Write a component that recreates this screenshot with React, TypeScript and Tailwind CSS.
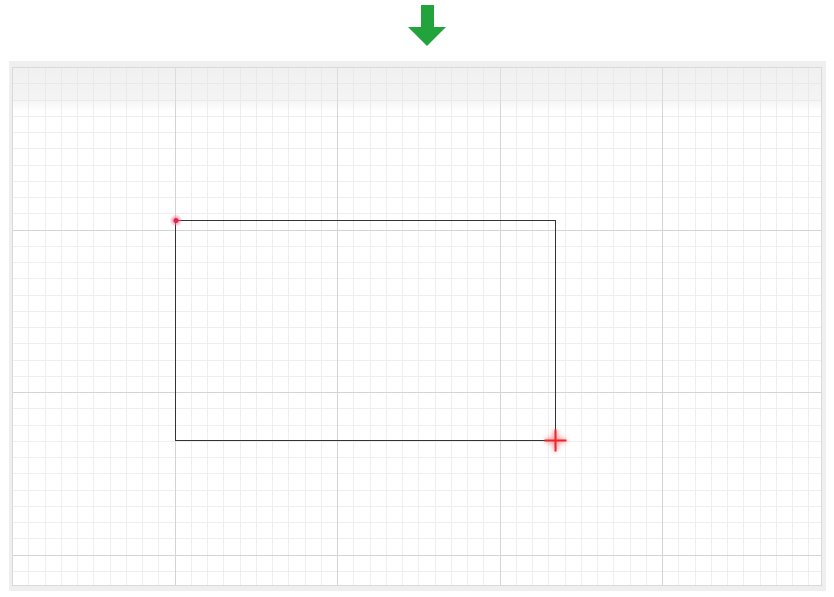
import React from 'react'

// canvas geometry: 10 minor cells per major cell
const W = 810
const H = 519
const MAJOR = 162.5
const MINOR = MAJOR / 10

function GridCanvas() {
  const minorX: number[] = []
  const minorY: number[] = []
  const majorX: number[] = []
  const majorY: number[] = []
  for (let i = 0; i * MINOR <= W; i++) {
    const x = Math.round(i * MINOR) + 0.5
    if (i % 10 === 0) majorX.push(x)
    else minorX.push(x)
  }
  for (let i = 0; i * MINOR <= H; i++) {
    const y = Math.round(i * MINOR) + 0.5
    if (i % 10 === 0) majorY.push(y)
    else minorY.push(y)
  }

  return (
    <svg width={W} height={H} className="block">
      <defs>
        <linearGradient id="shade" x1="0" y1="0" x2="0" y2="1">
          <stop offset="0" stopColor="#e4e4e4" stopOpacity="0.55" />
          <stop offset="0.75" stopColor="#e4e4e4" stopOpacity="0.4" />
          <stop offset="1" stopColor="#e4e4e4" stopOpacity="0" />
        </linearGradient>
        <radialGradient id="dotGlow">
          <stop offset="0" stopColor="#f0507a" stopOpacity="0.75" />
          <stop offset="0.6" stopColor="#f4708f" stopOpacity="0.4" />
          <stop offset="1" stopColor="#f4708f" stopOpacity="0" />
        </radialGradient>
        <filter id="blur" x="-1" y="-1" width="3" height="3">
          <feGaussianBlur stdDeviation="2.5" />
        </filter>
      </defs>

      <rect x={0} y={0} width={W} height={H} fill="#ffffff" />
      {minorX.map((x) => (
        <line key={'mx' + x} x1={x} y1={0} x2={x} y2={H} stroke="#eeeeee" strokeWidth={1} />
      ))}
      {minorY.map((y) => (
        <line key={'my' + y} x1={0} y1={y} x2={W} y2={y} stroke="#eeeeee" strokeWidth={1} />
      ))}
      {majorX.map((x) => (
        <line key={'Mx' + x} x1={x} y1={0} x2={x} y2={H} stroke="#d4d4d4" strokeWidth={1} />
      ))}
      {majorY.map((y) => (
        <line key={'My' + y} x1={0} y1={y} x2={W} y2={y} stroke="#d4d4d4" strokeWidth={1} />
      ))}

      {/* toolbar shade along the top edge */}
      <rect x={0} y={0} width={W} height={44} fill="url(#shade)" />

      {/* drawn rectangle */}
      <rect x={163.5} y={153.5} width={380} height={220} fill="none" stroke="#333333" strokeWidth={1} />

      {/* start point */}
      <circle cx={164} cy={153.5} r={6.5} fill="url(#dotGlow)" />
      <circle cx={164} cy={153.5} r={2.5} fill="#e0264a" />

      {/* cursor crosshair */}
      <g transform="translate(543.5 373.5)">
        <g filter="url(#blur)" opacity={0.6}>
          <line x1={-10} y1={0} x2={10} y2={0} stroke="#f03a3a" strokeWidth={4} />
          <line x1={0} y1={-10} x2={0} y2={10} stroke="#f03a3a" strokeWidth={4} />
        </g>
        <line x1={-11} y1={0} x2={11} y2={0} stroke="#e8262c" strokeWidth={2} />
        <line x1={0} y1={-11} x2={0} y2={11} stroke="#e8262c" strokeWidth={2} />
      </g>

      <rect x={0.5} y={0.5} width={W - 1} height={H - 1} fill="none" stroke="#d9d9d9" strokeWidth={1} />
    </svg>
  )
}

export default function App() {
  return (
    <div className="w-[834px] h-[597px] bg-white overflow-hidden">
      {/* download marker */}
      <div className="pt-[5px] pl-[408px]">
        <svg width={38} height={41} viewBox="0 0 38 41" className="block">
          <polygon points="13,0 26,0 26,22 38,22 19,41 0,22 13,22" fill="#22a33b" />
        </svg>
      </div>

      <div className="mt-[15px] ml-[9px] w-[817px] h-[530px] bg-[#efefef] pt-[6px] pl-[3px]">
        <div className="w-[810px] h-[519px]">
          <GridCanvas />
        </div>
      </div>
    </div>
  )
}
